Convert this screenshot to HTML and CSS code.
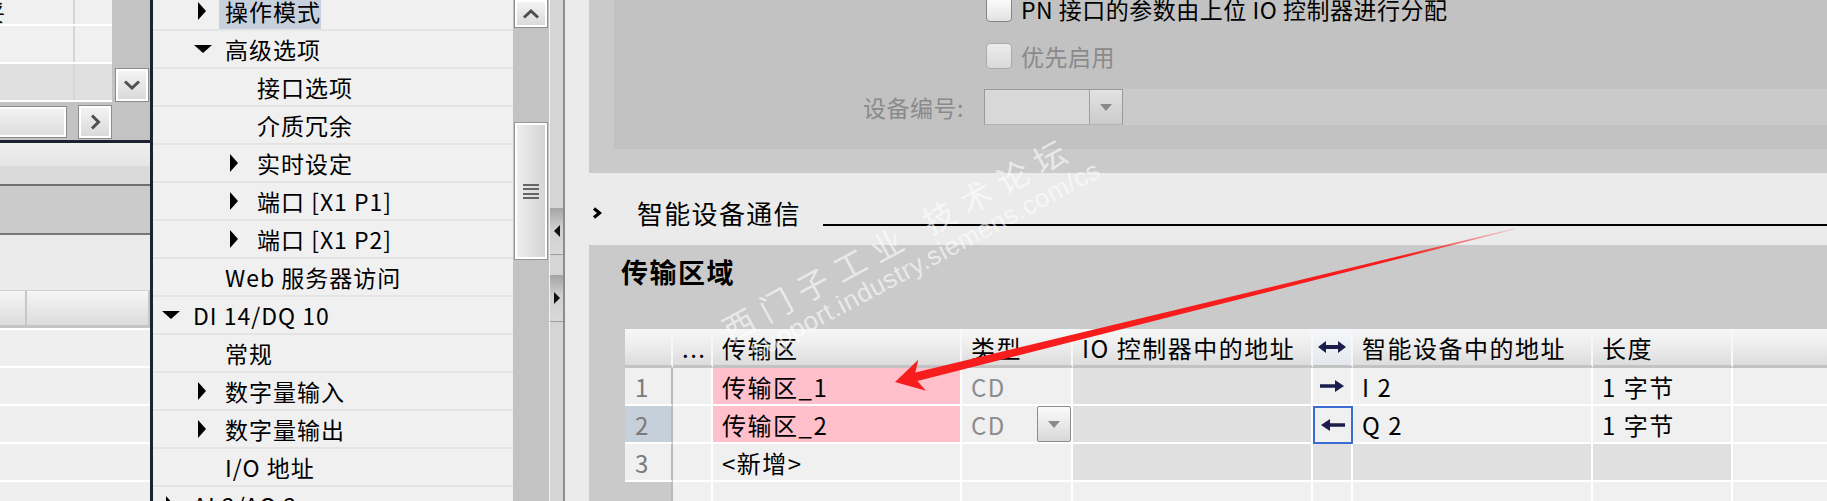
FILE: index.html
```html
<!DOCTYPE html>
<html lang="zh-CN">
<head>
    <meta charset="UTF-8">
    <title>智能设备通信 - 传输区域</title>
    <link rel="stylesheet" href="styles.css">
</head>
<body>
<div class="screen">
    <!-- left pane: overview table -->
    <div class="side">
        <div class="mini">
            <div class="mini-cells">
                <div class="mini-row first"><div class="mini-cell"><span class="clip">妥</span></div><div class="mini-cell"></div></div>
                <div class="mini-row"><div class="mini-cell"></div><div class="mini-cell"></div></div>
                <div class="mini-row dim"><div class="mini-cell"></div><div class="mini-cell"></div></div>
            </div>
            <div class="mini-vscroll">
                <div class="sbtn">
                    <svg width="18" height="10" viewBox="0 0 18 10"><polyline points="2,1.5 9,8 16,1.5" fill="none" stroke="#4f4f4f" stroke-width="3"/></svg>
                </div>
            </div>
            <div class="mini-hscroll">
                <div class="hthumb"></div>
                <div class="sbtn">
                    <svg width="11" height="16" viewBox="0 0 11 16"><polyline points="2,1.5 8.5,8 2,14.5" fill="none" stroke="#4f4f4f" stroke-width="3"/></svg>
                </div>
            </div>
            <div class="mini-corner"></div>
        </div>
        <div class="side-bar"></div>
        <div class="band-a"></div>
        <div class="band-b"></div>
        <div class="band-c"></div>
        <div class="band-d"></div>
        <div class="side-head"><div class="c1"></div><div class="c2"></div></div>
        <div class="side-row"></div>
        <div class="side-row"></div>
        <div class="side-row"></div>
        <div class="side-row"></div>
        <div class="side-row"></div>
    </div>
    <div class="vsplit"></div>

    <!-- navigation tree -->
    <div class="tree">
        <div class="tree-list">
            <div class="node lv1"><span class="tog closed"></span><span class="sel">操作模式</span></div>
            <div class="node lv1"><span class="tog open"></span>高级选项</div>
            <div class="node lv2"><span class="tog"></span>接口选项</div>
            <div class="node lv2"><span class="tog"></span>介质冗余</div>
            <div class="node lv2"><span class="tog closed"></span>实时设定</div>
            <div class="node lv2"><span class="tog closed"></span>端口 [X1 P1]</div>
            <div class="node lv2"><span class="tog closed"></span>端口 [X1 P2]</div>
            <div class="node lv1"><span class="tog"></span>Web 服务器访问</div>
            <div class="node lv0"><span class="tog open"></span>DI 14/DQ 10</div>
            <div class="node lv1"><span class="tog"></span>常规</div>
            <div class="node lv1"><span class="tog closed"></span>数字量输入</div>
            <div class="node lv1"><span class="tog closed"></span>数字量输出</div>
            <div class="node lv1"><span class="tog"></span>I/O 地址</div>
            <div class="node lv0"><span class="tog closed"></span>AI 2/AQ 2</div>
        </div>
    </div>
    <div class="tree-scroll">
        <div class="sbtn up">
            <svg width="18" height="10" viewBox="0 0 18 10"><polyline points="2,8.5 9,2 16,8.5" fill="none" stroke="#4f4f4f" stroke-width="3"/></svg>
        </div>
        <div class="thumb"><div class="grip"></div></div>
    </div>
    <div class="collapse">
        <div class="ctoggle first"><span class="tri-left"></span></div>
        <div class="ctoggle"><span class="tri-right"></span></div>
    </div>
    <div class="split2"></div>

    <!-- property area -->
    <div class="main">
        <div class="params">
            <div class="params-inner">
                <div class="prow r1"><span class="lbl"></span><span class="chk"></span><span class="ptext">PN 接口的参数由上位 IO 控制器进行分配</span></div>
                <div class="prow r2"><span class="lbl"></span><span class="chk off"></span><span class="ptext off">优先启用</span></div>
                <div class="prow r3">
                    <span class="lbl">设备编号:</span>
                    <div class="combo">
                        <div class="field"></div>
                        <div class="arrowbox"><span class="tri-down"></span></div>
                    </div>
                    <div class="fill"></div>
                </div>
            </div>
        </div>

        <div class="section-head">
            <div class="chev"><svg width="10" height="12" viewBox="0 0 10 12"><polyline points="2,1.5 7.5,6 2,10.5" fill="none" stroke="#000" stroke-width="3.2"/></svg></div>
            <h2>智能设备通信</h2>
            <div class="rule"></div>
        </div>

        <div class="transfer">
            <h3>传输区域</h3>
            <div class="grid">
                <div class="th"></div>
                <div class="th">...</div>
                <div class="th">传输区</div>
                <div class="th">类型</div>
                <div class="th">IO 控制器中的地址</div>
                <div class="th dir"><svg width="28" height="12" viewBox="0 0 28 12"><path d="M0 6 8 0v4h12V0l8 6-8 6V8H8v4z" fill="#1b1d4c"/></svg></div>
                <div class="th">智能设备中的地址</div>
                <div class="th">长度</div>
                <div class="th last"></div>

                <div class="td num">1</div>
                <div class="td"></div>
                <div class="td pink">传输区_1</div>
                <div class="td muted">CD</div>
                <div class="td shade"></div>
                <div class="td dir"><svg width="24" height="12" viewBox="0 0 24 12"><path d="M0 4.2h15V0l9 6-9 6V7.8H0z" fill="#1b1d4c"/></svg></div>
                <div class="td">I 2</div>
                <div class="td">1 字节</div>
                <div class="td last"></div>

                <div class="td num cur">2</div>
                <div class="td"></div>
                <div class="td pink">传输区_2</div>
                <div class="td muted">CD<span class="dd"><span class="tri-down"></span></span></div>
                <div class="td shade"></div>
                <div class="td dir picked"><svg width="24" height="12" viewBox="0 0 24 12"><path d="M24 4.2H9V0L0 6l9 6V7.8h15z" fill="#1b1d4c"/></svg></div>
                <div class="td">Q 2</div>
                <div class="td">1 字节</div>
                <div class="td last"></div>

                <div class="td num">3</div>
                <div class="td"></div>
                <div class="td">&lt;新增&gt;</div>
                <div class="td"></div>
                <div class="td shade"></div>
                <div class="td shade"></div>
                <div class="td shade"></div>
                <div class="td shade"></div>
                <div class="td last"></div>

                <div class="td num blank"></div>
                <div class="td"></div>
                <div class="td"></div>
                <div class="td"></div>
                <div class="td"></div>
                <div class="td"></div>
                <div class="td"></div>
                <div class="td"></div>
                <div class="td last"></div>
            </div>
        </div>
    </div>
</div>

<!-- forum watermark and red annotation arrow lie over the screenshot -->
<div class="wm-cn">西门子工业 技术论坛</div>
<div class="wm-url">support.industry.siemens.com/cs</div>
<svg class="annot" width="1827" height="501" viewBox="0 0 1827 501">
    <defs>
        <linearGradient id="fade" gradientUnits="userSpaceOnUse" x1="895" y1="382" x2="1514" y2="229">
            <stop offset="0" stop-color="#f81d1d"/>
            <stop offset="0.82" stop-color="#f81d1d"/>
            <stop offset="1" stop-color="#f81d1d" stop-opacity="0.15"/>
        </linearGradient>
    </defs>
    <polygon points="895,382 918.3,359.7 915.3,372.4 1513.9,228.5 1514.1,229.5 917.4,381.1 926,390.8" fill="url(#fade)"/>
</svg>
</body>
</html>
```

FILE: styles.css
```css
* {
    box-sizing: border-box;
}
body {
    margin: 0;
    width: 1827px;
    height: 501px;
    overflow: hidden;
    position: relative;
    background: #ebebeb;
    font-family: "Noto Sans CJK SC", "Liberation Sans", sans-serif;
    color: #000;
}
.screen {
    display: flex;
    height: 501px;
}

/* left pane */
.side {
    width: 150px;
    flex: none;
    display: flex;
    flex-direction: column;
    background: #efefef;
    overflow: hidden;
}
.mini {
    flex: none;
    display: grid;
    grid-template-columns: 114px 36px;
    grid-template-rows: 103px 37px;
    background: #c3c3c3;
}
.mini-cells {
    width: 112px;
    display: flex;
    flex-direction: column;
}
.mini-row {
    height: 38px;
    display: flex;
    background: #f0f0f0;
    border-bottom: 2px solid #fff;
}
.mini-row.first {
    height: 26px;
}
.mini-row.dim {
    background: #e0e0e0;
}
.mini-cell {
    width: 75px;
    border-right: 2px solid #d6d6d6;
    overflow: hidden;
    font-size: 22px;
    line-height: 22px;
}
.mini-cell + .mini-cell {
    flex: 1;
    border-right: none;
}
.clip {
    display: block;
    margin-left: -17px;
}
.mini-vscroll {
    display: flex;
    flex-direction: column;
    justify-content: flex-end;
    padding: 0 1px 1px;
}
.mini-hscroll {
    display: flex;
    align-items: center;
    gap: 11px;
}
.sbtn {
    width: 34px;
    height: 34px;
    border: 1px solid #8c8c8c;
    box-shadow: inset 0 0 0 2px #fff;
    background: linear-gradient(#f5f5f5, #d8d8d8);
    display: flex;
    align-items: center;
    justify-content: center;
}
.hthumb {
    width: 67px;
    height: 32px;
    border: 1px solid #8c8c8c;
    border-left: none;
    box-shadow: inset 0 2px #fff, inset -2px 0 #fff, inset 0 -2px #fff;
    background: linear-gradient(#f3f3f3, #dcdcdc);
}
.side-bar {
    height: 3px;
    flex: none;
    background: #1b2232;
}
.band-a {
    height: 23px;
    flex: none;
    background: linear-gradient(#eeeeee, #e5e5e5);
}
.band-b {
    height: 20px;
    flex: none;
    background: #dadada;
    border-bottom: 2px solid #6f6f6f;
}
.band-c {
    height: 49px;
    flex: none;
    background: #cbcbcb;
    border-bottom: 2px solid #787878;
}
.band-d {
    height: 55px;
    flex: none;
    background: #ebebeb;
}
.side-head {
    height: 38px;
    flex: none;
    display: flex;
    border-top: 1px solid #d2d2d2;
    border-bottom: 3px solid #c4c4c4;
    background: linear-gradient(#f6f6f6, #e9e9e9 50%, #dcdcdc);
}
.side-head .c1 {
    width: 27px;
    border-right: 2px solid #c8c8c8;
}
.side-head .c2 {
    flex: 1;
    border-right: 2px solid #c8c8c8;
}
.side-row {
    height: 38px;
    flex: none;
    border-top: 2px solid #fff;
    background: #efefef;
}
.vsplit {
    width: 3px;
    flex: none;
    background: #1b2232;
}

/* tree */
.tree {
    width: 360px;
    flex: none;
    background: #f0f0f0;
    overflow: hidden;
}
.tree-list {
    margin-top: -7px;
}
.node {
    height: 38px;
    display: flex;
    align-items: center;
    border-bottom: 2px solid #e4e4e4;
    font-size: 23px;
    letter-spacing: 1px;
    white-space: nowrap;
}
.lv0 { padding-left: 8px; }
.lv1 { padding-left: 40px; }
.lv2 { padding-left: 72px; }
.tog {
    width: 32px;
    flex: none;
    display: flex;
    align-items: center;
}
.tog.closed::before {
    content: "";
    margin-left: 5px;
    border-left: 8px solid #000;
    border-top: 9px solid transparent;
    border-bottom: 9px solid transparent;
}
.tog.open::before {
    content: "";
    margin-left: 1px;
    border-top: 8px solid #000;
    border-left: 9px solid transparent;
    border-right: 9px solid transparent;
}
.node .sel {
    align-self: stretch;
    display: flex;
    align-items: center;
    margin-left: -6px;
    padding-left: 6px;
    background: #c7d1dd;
}
.tree-scroll {
    width: 36px;
    flex: none;
    background: #c3c3c3;
    padding: 0 1px;
    display: flex;
    flex-direction: column;
}
.tree-scroll .up {
    height: 28px;
    border-top: none;
}
.thumb {
    margin-top: 94px;
    height: 138px;
    border: 1px solid #959595;
    box-shadow: inset 0 0 0 2px #fff;
    background: linear-gradient(90deg, #efefef, #d3d3d3);
    display: flex;
    align-items: center;
    justify-content: center;
}
.grip {
    width: 16px;
    height: 15px;
    background: repeating-linear-gradient(#666 0 2px, transparent 2px 4.33px);
}
.collapse {
    width: 14px;
    flex: none;
    background: #d5d5d5;
    border-left: 1px solid #f2f2f2;
    display: flex;
    flex-direction: column;
}
.ctoggle {
    height: 47px;
    background: linear-gradient(#a4a4a4, #cfcfcf 45%, #d9d9d9);
    border-bottom: 1px solid #9d9d9d;
    display: flex;
    align-items: center;
    justify-content: center;
}
.ctoggle.first {
    margin-top: 208px;
}
.ctoggle + .ctoggle {
    margin-top: 20px;
}
.tri-left {
    border-right: 6px solid #111;
    border-top: 6px solid transparent;
    border-bottom: 6px solid transparent;
}
.tri-right {
    border-left: 6px solid #111;
    border-top: 6px solid transparent;
    border-bottom: 6px solid transparent;
}
.split2 {
    width: 2px;
    flex: none;
    background: #8c8c8c;
}

/* main property area */
.main {
    flex: 1;
    min-width: 0;
    display: flex;
    flex-direction: column;
}
.params {
    margin-left: 24px;
    height: 173px;
    flex: none;
    background: #cacaca;
}
.params-inner {
    margin-left: 25px;
    height: 149px;
    background: #c2c2c2;
    display: flex;
    flex-direction: column;
}
.prow {
    height: 36px;
    flex: none;
    display: flex;
    align-items: center;
    font-size: 23px;
    letter-spacing: 0.5px;
    white-space: nowrap;
}
.prow.r1 { margin-top: -9px; }
.prow.r2 { margin-top: 11px; }
.prow.r3 { margin-top: 15px; }
.prow .lbl {
    width: 370px;
    flex: none;
    text-align: right;
    padding-right: 20px;
    color: #8a8a8a;
}
.chk {
    width: 26px;
    height: 26px;
    flex: none;
    margin-left: 2px;
    border: 1.5px solid #858585;
    border-radius: 4px;
    background: linear-gradient(#fefefe, #e2e2e2);
}
.chk.off {
    border-color: #ababab;
    background: linear-gradient(#ececec, #d9d9d9);
}
.ptext {
    margin-left: 9px;
}
.ptext.off {
    color: #8a8a8a;
}
.combo {
    width: 139px;
    height: 36px;
    flex: none;
    display: flex;
    border: 1px solid #9a9a9a;
    border-bottom-color: #b4b4b4;
}
.combo .field {
    flex: 1;
    background: #d8d8d8;
}
.arrowbox {
    width: 33px;
    border-left: 1px solid #a0a0a0;
    background: linear-gradient(#e3e3e3, #cbcbcb);
    display: flex;
    align-items: center;
    justify-content: center;
}
.tri-down {
    border-top: 7px solid #8a8a8a;
    border-left: 6px solid transparent;
    border-right: 6px solid transparent;
}
.fill {
    flex: 1;
    align-self: stretch;
    background: #cacaca;
}
.section-head {
    height: 72px;
    flex: none;
    display: flex;
    align-items: flex-start;
    padding: 25px 0 0 27px;
}
.chev {
    width: 10px;
    height: 30px;
    display: flex;
    align-items: center;
}
.section-head h2 {
    margin: 0 0 0 35px;
    font-size: 26px;
    font-weight: normal;
    line-height: 30px;
    letter-spacing: 1.3px;
    white-space: nowrap;
}
.rule {
    flex: 1;
    height: 2px;
    margin: 26px 0 0 22px;
    background: #000;
}
.transfer {
    margin-left: 24px;
    flex: 1;
    background: #cacaca;
    overflow: hidden;
}
.transfer h3 {
    margin: 0;
    height: 54px;
    line-height: 54px;
    padding-left: 32px;
    font-size: 27px;
    font-weight: bold;
    letter-spacing: 1.5px;
}
.grid {
    margin: 30px 0 0 36px;
    display: grid;
    grid-template-columns: 48px 40px 249px 111px 240px 40px 240px 140px 1fr;
    font-size: 24px;
    letter-spacing: 1.5px;
}
.th {
    height: 39px;
    display: flex;
    align-items: center;
    padding-left: 9px;
    border-right: 2px solid #f8f8f8;
    border-bottom: 3px solid #c3c3c3;
    background: linear-gradient(#f7f7f7, #ececec 50%, #dcdcdc);
    white-space: nowrap;
}
.th.dir {
    padding-left: 0;
    justify-content: center;
    background: linear-gradient(#f5f7fa, #e4e8ee);
}
.td {
    height: 38px;
    display: flex;
    align-items: center;
    padding-left: 9px;
    border-right: 2px solid #fff;
    border-bottom: 2px solid #fff;
    background: #f0f0f0;
    white-space: nowrap;
}
.th.last, .td.last {
    border-right: none;
}
.td.num {
    padding-left: 10px;
    color: #7a7a7a;
    border-right-color: #b9b9b9;
}
.td.num.cur {
    background: #c6d0da;
}
.td.num.blank {
    background: #cacaca;
}
.td.pink {
    background: #ffc0cb;
}
.td.muted {
    color: #8c8c8c;
}
.td.shade {
    background: #e0e0e0;
}
.td.dir {
    padding-left: 0;
    justify-content: center;
}
.td.picked {
    border: 2px solid #3a6cd4;
}
.dd {
    width: 34px;
    height: 36px;
    margin-left: auto;
    border: 1px solid #8c8c8c;
    border-radius: 2px;
    background: linear-gradient(#fbfbfb, #d8d8d8);
    display: flex;
    align-items: center;
    justify-content: center;
}

/* overlays */
.wm-cn {
    position: absolute;
    left: 724px;
    top: 311px;
    line-height: 40px;
    font-size: 32px;
    letter-spacing: 10px;
    color: rgba(255, 255, 255, 0.6);
    white-space: nowrap;
    transform: rotate(-28.4deg);
    transform-origin: 0 50%;
    pointer-events: none;
}
.wm-url {
    position: absolute;
    left: 752px;
    top: 337px;
    line-height: 30px;
    font-family: "Liberation Sans", sans-serif;
    font-size: 26px;
    letter-spacing: 0.5px;
    color: rgba(255, 255, 255, 0.6);
    white-space: nowrap;
    transform: rotate(-28deg);
    transform-origin: 0 50%;
    pointer-events: none;
}
.annot {
    position: absolute;
    left: 0;
    top: 0;
    pointer-events: none;
}
```
